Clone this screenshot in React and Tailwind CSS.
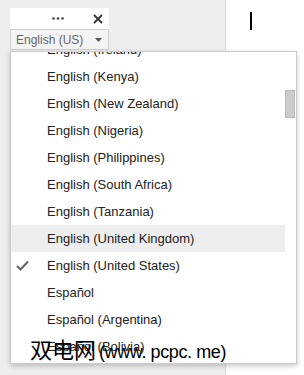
import React from "react";

const items = [
  "English (Ireland)",
  "English (Kenya)",
  "English (New Zealand)",
  "English (Nigeria)",
  "English (Philippines)",
  "English (South Africa)",
  "English (Tanzania)",
  "English (United Kingdom)",
  "English (United States)",
  "Español",
  "Español (Argentina)",
  "Español (Bolivia)",
  "Español (Chile)",
];

export default function App() {
  return (
    <div className="relative w-[304px] h-[375px] overflow-hidden flex bg-white font-['Liberation_Sans',Arial,sans-serif]">
      <div className="w-[226px] h-full bg-[#eeeeee] border-r border-[#dcdcdc] pt-[8px] pl-[10px]">
        <div className="w-[99px] bg-white">
          <div className="h-[21px] flex items-center">
            <svg width="12" height="3" viewBox="0 0 12 3" className="ml-[42px]">
              <circle cx="1.5" cy="1.5" r="1.3" fill="#444" />
              <circle cx="6" cy="1.5" r="1.3" fill="#444" />
              <circle cx="10.5" cy="1.5" r="1.3" fill="#444" />
            </svg>
            <svg width="10" height="10" viewBox="0 0 10 10" className="ml-[29px]">
              <path d="M1 1 L9 9 M9 1 L1 9" stroke="#333" strokeWidth="1.8" />
            </svg>
          </div>
          <div className="h-[21px] border border-[#d0d0d0] bg-[#f4f4f4] flex items-center pl-[5px] text-[12px] text-[#666]">
            <span>English (US)</span>
            <svg width="7" height="4" viewBox="0 0 7 4" className="ml-[12px]">
              <path d="M0 0 L7 0 L3.5 4 Z" fill="#555" />
            </svg>
          </div>
        </div>
      </div>
      <div className="flex-1">
        <div className="ml-[24px] mt-[12px] w-[2px] h-[18px] bg-black" />
      </div>

      <div className="absolute left-[10px] top-[51px] w-[287px] h-[313px] border border-[#cccccc] bg-white shadow-[0_2px_5px_rgba(0,0,0,0.22)] overflow-hidden">
        <div className="mt-[-16px] w-[274px]">
          {items.map((t, i) => (
            <div
              key={t}
              className={
                "h-[27px] flex items-center text-[13px] text-[#222] relative " +
                (i === 7 ? "bg-[#eeeeee]" : "")
              }
            >
              {i === 8 && (
                <svg width="13" height="11" viewBox="0 0 13 11" className="absolute left-[5px] top-[8px]">
                  <path d="M1 6 L4.5 9.5 L12 1.5" stroke="#666" strokeWidth="2" fill="none" />
                </svg>
              )}
              <span className="pl-[36px]">{t}</span>
            </div>
          ))}
        </div>
        <div className="absolute left-[274px] top-[38px] w-[10px] h-[28px] bg-[#cccccc] border border-[#bbbbbb]" />
      </div>

      <div className="absolute left-[30px] top-[337px] flex items-baseline text-black leading-none font-['Noto_Sans_CJK_SC',sans-serif]">
        <span className="text-[22px]">双电网</span>
        <span className="text-[18px] ml-[3px] font-['Liberation_Sans',Arial,sans-serif] tracking-[-0.4px]">(www. pcpc. me)</span>
      </div>
    </div>
  );
}
